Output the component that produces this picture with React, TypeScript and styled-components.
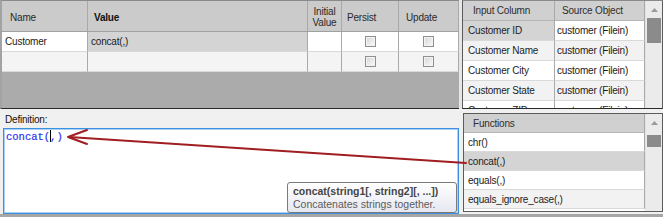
import React from 'react';
import styled, { createGlobalStyle } from 'styled-components';

const GlobalStyle = createGlobalStyle`
  html, body {
    margin: 0;
    padding: 0;
    background: #f0f0f0;
  }
  body {
    font-family: 'Liberation Sans', Arial, sans-serif;
  }
`;

const Window = styled.div`
  position: relative;
  width: 663px;
  height: 217px;
  box-sizing: border-box;
  overflow: hidden;
  display: flex;
  flex-direction: column;
  background: #f0f0f0;
  border-bottom: 3px solid #a6a6a6;
  font-family: 'Liberation Sans', Arial, sans-serif;
  font-size: 10px;
  letter-spacing: -0.2px;
  color: #1c1c1c;
`;

const TopRow = styled.div`
  display: flex;
  height: 109px;
  flex-shrink: 0;
`;

const BottomRow = styled.div`
  display: flex;
  flex: 1;
  min-height: 0;
`;

const ParamGrid = styled.div`
  width: 459px;
  height: 109px;
  box-sizing: border-box;
  display: grid;
  grid-template-columns: 86px 220px 34px 57px 60px;
  grid-template-rows: 31px 20px 20px;
  align-content: start;
  background: #ababab;
  border-top: 1px solid #8a8a8a;
  border-left: 2px solid #a3a3a3;
  border-bottom: 1px solid #2a2a2a;
`;

const Splitter = styled.div`
  width: 3px;
  background: #e6e6e6;
`;

const HeaderCell = styled.div<{ $bold?: boolean; $center?: boolean; $pad?: number }>`
  display: flex;
  align-items: center;
  justify-content: ${(p) => (p.$center ? 'center' : 'flex-start')};
  text-align: ${(p) => (p.$center ? 'center' : 'left')};
  padding-left: ${(p) => p.$pad ?? 6}px;
  padding-top: 2px;
  box-sizing: border-box;
  overflow: hidden;
  white-space: nowrap;
  background: #cbcbcb;
  border-right: 1px solid #a9a9a9;
  border-bottom: 1px solid #a0a0a0;
  font-weight: ${(p) => (p.$bold ? 'bold' : 'normal')};
  line-height: 11px;
  color: ${(p) => (p.$bold ? '#101010' : '#2a2a2a')};
`;

const Cell = styled.div<{ $bg?: string; $center?: boolean; $pad?: number }>`
  display: flex;
  align-items: center;
  justify-content: ${(p) => (p.$center ? 'center' : 'flex-start')};
  padding-left: ${(p) => (p.$center ? 0 : p.$pad ?? 3)}px;
  box-sizing: border-box;
  overflow: hidden;
  white-space: nowrap;
  background: ${(p) => p.$bg ?? '#ffffff'};
  border-right: 1px solid #a9a9a9;
  border-bottom: 1px solid #d9d9d9;
`;

const CheckBox = styled.span`
  display: block;
  width: 11px;
  height: 11px;
  box-sizing: border-box;
  border: 1px solid #8f8f8f;
  background: linear-gradient(135deg, #d6d6d6 0%, #efefef 70%, #fafafa 100%);
  box-shadow: inset 0 0 0 1px #f4f4f4;
`;

const ListPanel = styled.div<{ $cols: string; $rows: string }>`
  box-sizing: border-box;
  display: grid;
  grid-template-columns: ${(p) => p.$cols};
  grid-auto-rows: ${(p) => p.$rows};
  align-content: start;
  overflow: hidden;
  background: #ffffff;
  border: 1px solid #5c5c5c;
`;

const SourceGrid = styled(ListPanel)`
  width: 201px;
  height: 109px;
  border-top-color: #8a8a8a;
  border-bottom-color: #2a2a2a;
`;

const FunctionList = styled(ListPanel)`
  width: 200px;
  margin: 4px 0 2px 2px;
`;

const ListHeader = styled.div<{ $pad?: number }>`
  display: flex;
  align-items: center;
  padding-left: ${(p) => p.$pad ?? 8}px;
  box-sizing: border-box;
  white-space: nowrap;
  background: #d0d0d0;
  border-right: 1px solid #a9a9a9;
  border-bottom: 1px solid #b4b4b4;
  color: #2e2e2e;
`;

const ScrollBar = styled.div`
  grid-column: 3;
  grid-row: 1 / span 20;
  display: flex;
  flex-direction: column;
  background: #ebebeb;
  border-left: 1px solid #e2e2e2;
`;

const FunctionScroll = styled(ScrollBar)`
  grid-column: 2;
`;

const ScrollButton = styled.div`
  height: 17px;
  display: flex;
  align-items: center;
  justify-content: center;
  flex-shrink: 0;
`;

const ScrollTrack = styled.div`
  flex: 1;
  display: flex;
  flex-direction: column;
`;

const ScrollThumb = styled.div<{ $offset: number; $size: number }>`
  margin: ${(p) => p.$offset}px 1px 0 1px;
  height: ${(p) => p.$size}px;
  background: #8b8b8b;
`;

const DefinitionPanel = styled.div`
  position: relative;
  width: 461px;
  display: flex;
  flex-direction: column;
`;

const FieldLabel = styled.div`
  padding: 5px 0 0 5px;
  line-height: 12px;
  color: #111111;
`;

const CodeBox = styled.div`
  flex: 1;
  margin: 2px 0 0 3px;
  width: 456px;
  box-sizing: border-box;
  padding: 1px 2px;
  background: #ffffff;
  border: 1px solid #3d8fe0;
  box-shadow: inset 0 0 0 1px #a9d0f5;
  font-family: 'Liberation Mono', 'Courier New', monospace;
  font-size: 10.5px;
  letter-spacing: 0;
  line-height: 13px;
  color: #3030f0;
  -webkit-text-stroke: 0.2px #3030f0;
`;

const Caret = styled.span`
  display: inline-block;
  width: 1px;
  height: 12px;
  margin-right: -1px;
  vertical-align: -2px;
  background: #000000;
`;

const Tooltip = styled.div`
  position: absolute;
  left: 287px;
  top: 73px;
  width: 170px;
  height: 31px;
  box-sizing: border-box;
  padding: 2px 5px;
  border: 1px solid #7a7a7a;
  border-radius: 3px;
  background: linear-gradient(180deg, #ffffff 0%, #e6e7f0 100%);
  font-size: 10.5px;
  letter-spacing: 0;
  line-height: 13px;
  white-space: nowrap;
`;

const TipTitle = styled.div`
  font-weight: bold;
  color: #454545;
`;

const TipText = styled.div`
  color: #5b5b5b;
`;

const ArrowLayer = styled.svg`
  position: absolute;
  left: 0;
  top: 0;
  pointer-events: none;
`;

const Triangle = ({ down }: { down?: boolean }) => (
  <svg width="7" height="4" viewBox="0 0 7 4">
    <path d={down ? 'M0 0 L7 0 L3.5 4 Z' : 'M0 4 L7 4 L3.5 0 Z'} fill="#9a9a9a" />
  </svg>
);

const Scroll = ({ offset, size, inList }: { offset: number; size: number; inList?: boolean }) => {
  const Bar = inList ? FunctionScroll : ScrollBar;
  return (
    <Bar>
      <ScrollButton>
        <Triangle />
      </ScrollButton>
      <ScrollTrack>
        <ScrollThumb $offset={offset} $size={size} />
      </ScrollTrack>
      <ScrollButton>
        <Triangle down />
      </ScrollButton>
    </Bar>
  );
};

const sources = [
  { column: 'Customer ID', bg: '#d4d4d4', srcBg: '#ffffff' },
  { column: 'Customer Name', bg: '#f2f2f2', srcBg: '#f2f2f2' },
  { column: 'Customer City', bg: '#ffffff', srcBg: '#ffffff' },
  { column: 'Customer State', bg: '#f2f2f2', srcBg: '#f2f2f2' },
  { column: 'Customer ZIP', bg: '#ffffff', srcBg: '#ffffff' },
];

const functions = [
  { name: 'chr()', bg: '#ffffff' },
  { name: 'concat(,)', bg: '#d4d4d4' },
  { name: 'equals(,)', bg: '#ffffff' },
  { name: 'equals_ignore_case(,)', bg: '#f2f2f2' },
];

const App = () => {
  return (
    <>
      <GlobalStyle />
      <Window>
        <TopRow>
          <ParamGrid>
            <HeaderCell $pad={8}>Name</HeaderCell>
            <HeaderCell $bold>Value</HeaderCell>
            <HeaderCell $center $pad={0}>
              Initial
              <br />
              Value
            </HeaderCell>
            <HeaderCell $pad={5}>Persist</HeaderCell>
            <HeaderCell $pad={7}>Update</HeaderCell>

            <Cell>Customer</Cell>
            <Cell $bg="#d4d4d4">concat(,)</Cell>
            <Cell />
            <Cell $center>
              <CheckBox />
            </Cell>
            <Cell $center>
              <CheckBox />
            </Cell>

            <Cell $bg="#f4f4f4" />
            <Cell $bg="#f4f4f4" />
            <Cell $bg="#f4f4f4" />
            <Cell $bg="#f4f4f4" $center>
              <CheckBox />
            </Cell>
            <Cell $bg="#f4f4f4" $center>
              <CheckBox />
            </Cell>
          </ParamGrid>
          <Splitter />
          <SourceGrid $cols="92px 90px 17px" $rows="20px">
            <ListHeader $pad={10}>Input Column</ListHeader>
            <ListHeader $pad={7}>Source Object</ListHeader>
            <Scroll offset={0} size={25} />
            {sources.map((s) => (
              <React.Fragment key={s.column}>
                <Cell $bg={s.bg} $pad={5}>
                  {s.column}
                </Cell>
                <Cell $bg={s.srcBg} $pad={2}>
                  customer (Filein)
                </Cell>
              </React.Fragment>
            ))}
          </SourceGrid>
        </TopRow>
        <BottomRow>
          <DefinitionPanel>
            <FieldLabel>Definition:</FieldLabel>
            <CodeBox>
              concat(
              <Caret />
              ,)
            </CodeBox>
            <Tooltip>
              <TipTitle>concat(string1[, string2][, ...])</TipTitle>
              <TipText>Concatenates strings together.</TipText>
            </Tooltip>
          </DefinitionPanel>
          <FunctionList $cols="181px 17px" $rows="19px">
            <ListHeader $pad={9}>Functions</ListHeader>
            <Scroll offset={4} size={12} inList />
            {functions.map((f) => (
              <Cell key={f.name} $bg={f.bg} $pad={4}>
                {f.name}
              </Cell>
            ))}
          </FunctionList>
        </BottomRow>
        <ArrowLayer width="663" height="217" viewBox="0 0 663 217">
          <g stroke="#a01d22" strokeWidth="2" fill="none" strokeLinecap="round" strokeLinejoin="round">
            <line x1="69" y1="137" x2="466" y2="163" />
            <polyline points="87,130 68,137 87,144" />
          </g>
        </ArrowLayer>
      </Window>
    </>
  );
};

export default App;
